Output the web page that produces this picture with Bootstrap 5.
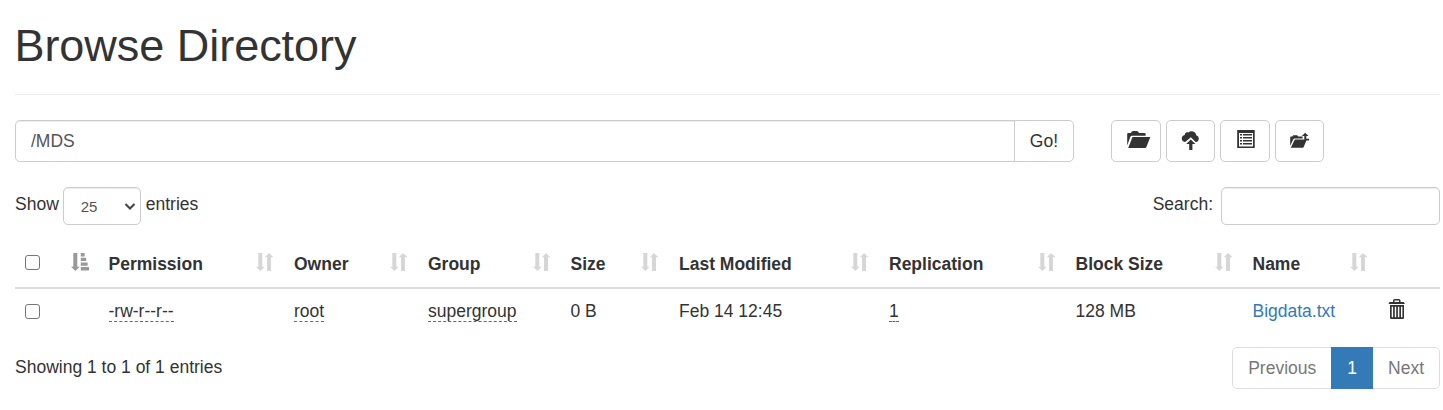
<!DOCTYPE html>
<html lang="en">
<head>
<meta charset="utf-8">
<meta name="viewport" content="width=device-width, initial-scale=1">
<title>Browsing HDFS</title>
<link href="https://cdn.jsdelivr.net/npm/bootstrap@5.3.0/dist/css/bootstrap.min.css" rel="stylesheet">
<style>
body { font: 17.5px/25px "Liberation Sans", Arial, sans-serif; color: #333; background: #fff; overflow: hidden; }
.page { padding: 21px 3px 0 15px; }
.page-title { font-size: 45px; line-height: 50px; font-weight: 400; padding-bottom: 23px; margin: 0 0 25px; border-bottom: 1px solid #eee; letter-spacing: -.03px; text-indent: -.6px; }
.form-control, .form-select { font-size: 17.5px; color: #555; border-color: #ccc; border-radius: 5px; box-shadow: inset 0 1px 1px rgba(0,0,0,.075); }
.path-group { width: 1059px; }
.path-group .form-control { height: 42px; padding: 0 15px; }
.btn-tool { --bs-btn-color: #333; --bs-btn-border-color: #ccc; --bs-btn-bg: #fff; --bs-btn-font-size: 17.5px; --bs-btn-border-radius: 5px; --bs-btn-padding-x: 15px; --bs-btn-padding-y: 0; height: 42px; line-height: 25px; }
.tools { margin-left: 37px; gap: 5px; }
.tools .btn { width: 49px; padding: 0; display: block; }
.tools .btn.wide { width: 50px; }
.tools svg { display: block; }
.controls { margin-top: 25px; height: 38px; }
.controls label { line-height: 34px; }
.length-select { width: 78px; height: 38px; font-size: 15px; line-height: 20px; padding: 1px 0 0 17px; margin: 0 5px 0 4px; background-size: 12px 12px; background-position: right 4px center;
  background-image: url("data:image/svg+xml,%3Csvg xmlns='http://www.w3.org/2000/svg' viewBox='0 0 12 12'%3E%3Cpath d='M1.5 4l4.5 4.5L10.5 4' fill='none' stroke='%23444' stroke-width='2.1'/%3E%3C/svg%3E"); }
.search-box { width: 219px; height: 38px; margin-left: 8px; }
.files { table-layout: fixed; width: 1425px; margin: 14px 0 0; --bs-table-color: #333; color: #333; }
.files > :not(caption) > * > * { padding: 0 10px; border: 0; vertical-align: middle; white-space: nowrap; }
.files > thead > tr > th { height: 50px; padding-top: 2px; border-bottom: 2px solid #ddd; }
.files thead tr { height: 49px; }
.files > thead > tr > th { height: 49px; }
.files td { height: 46px; }
.files > tbody > tr > td { padding-bottom: 1px; }
.files .form-check-input { display: block; width: 15px; height: 15px; margin: 0; border: 1px solid #767676; border-radius: 3px; }
.files thead .form-check-input { margin-bottom: 4px; }
.files thead svg { display: block; margin-bottom: 5px; color: #d6d6d6; }
.files thead svg.sorted { color: #999; }
.editable { border-bottom: 1px dashed #08c; display: inline-block; line-height: 20px; }
.files a { color: #337ab7; text-decoration: none; }
.info { padding-top: 21px; }
.pager-list { --bs-pagination-font-size: 17.5px; --bs-pagination-color: #777; --bs-pagination-border-color: #ddd; --bs-pagination-border-radius: 5px; --bs-pagination-padding-x: 15px; --bs-pagination-padding-y: 7.5px; --bs-pagination-active-bg: #337ab7; --bs-pagination-active-border-color: #337ab7; margin: 13px 0 0; }
.pager-list .page-link { height: 42px; line-height: 25px; }
</style>
</head>
<body>
<svg class="d-none" aria-hidden="true">
  <symbol id="sort" viewBox="0 0 18 18"><path fill="currentColor" d="M2.3 0h4v13.7h2.4L4.4 18 0 13.7h2.3zM11 18h4V4.3h2.4L13 0 8.8 4.3H11z"/></symbol>
</svg>
<main class="page">
  <h1 class="page-title">Browse Directory</h1>
  <div class="d-flex">
    <div class="input-group path-group">
      <input class="form-control" type="text" value="/MDS" aria-label="Directory">
      <button class="btn btn-tool" type="button">Go!</button>
    </div>
    <div class="d-flex tools">
      <button class="btn btn-tool wide" type="button" aria-label="Create directory"><svg width="48" height="40" viewBox="0 0 48 40"><path fill="#333" d="M15.2 24.5V13q0-1 1-1h2.7q.7-2 2.3-2h3.5q1.6 0 2.3 2h5.6q1 0 1 1v1.8H20q-1.2 0-1.6 1zM20.5 16h17.8l-4 10.3q-.3.8-1.1.8H16.2z"/></svg></button>
      <button class="btn btn-tool" type="button" aria-label="Upload files"><svg width="47" height="40" viewBox="0 0 47 40"><path fill="#333" d="M18.2 21h-.3a3.6 3.6 0 0 1-.2-7.1c.1-2.2 1.9-3.1 3.7-2.5 3-2.2 7.4-.7 7.9 2.9a3.5 3.5 0 0 1 .1 6.7h-.8l-4.8-4.8zM23.8 18.4l4.6 4.7h-3V29h-3.2v-5.9h-3z"/></svg></button>
      <button class="btn btn-tool wide" type="button" aria-label="Cut"><svg width="48" height="40" viewBox="0 0 48 40"><path fill="#333" fill-rule="evenodd" d="M16.2 9h17.5v18H16.2zm1.8 3v13.4h14V12z"/><path fill="#333" d="M19 13h2v1.5h-2zm3 0h9v1.5h-9zM19 16h2v1.5h-2zm3 0h9v1.5h-9zM19 19h2v1.5h-2zm3 0h9v1.5h-9zM19 22h2v1.5h-2zm3 0h9v1.5h-9z"/></svg></button>
      <button class="btn btn-tool" type="button" aria-label="Parent directory"><svg width="47" height="40" viewBox="0 0 47 40"><path fill="#333" d="M14.2 24.7v-8.5q0-.8.8-.8h1.4l.8-1.2h4l1 1.2h4.4v2h-8.2q-.8 0-1.2 1zM18.8 18.6h12l-3 7.2q-.3.9-1 .9H14.8zM29.2 11.8l3.3 3.1h-2.2v2.9h2.8v1.8h-4.8v-4.7h-2.4z"/></svg></button>
    </div>
  </div>
  <div class="d-flex justify-content-between controls">
    <div class="d-flex">
      <label for="length">Show</label>
      <select id="length" class="form-select length-select"><option>25</option></select>
      <label for="length">entries</label>
    </div>
    <div class="d-flex">
      <label for="search">Search:</label>
      <input id="search" type="search" class="form-control search-box">
    </div>
  </div>
  <table class="table files">
    <colgroup><col style="width:83.5px"><col style="width:185.5px"><col style="width:134px"><col style="width:142.5px"><col style="width:108.5px"><col style="width:210px"><col style="width:186.5px"><col style="width:177px"><col style="width:135px"><col style="width:62.5px"></colgroup>
    <thead>
      <tr>
        <th><div class="d-flex justify-content-between align-items-center"><input class="form-check-input" type="checkbox" aria-label="Select all"><svg class="sorted" width="18" height="18" viewBox="0 0 18 18"><path fill="currentColor" d="M2.3 0h4v13.7h2.4L4.4 18 0 13.7h2.3zM9.8 0h3.8v3.4H9.8zM9.8 4.7h5.4v3.4H9.8zM9.8 9.4h6.8v3.3H9.8zM9.8 14H18v3.4H9.8z"/></svg></div></th>
        <th><div class="d-flex justify-content-between align-items-center">Permission<svg width="18" height="18"><use href="#sort"/></svg></div></th>
        <th><div class="d-flex justify-content-between align-items-center">Owner<svg width="18" height="18"><use href="#sort"/></svg></div></th>
        <th><div class="d-flex justify-content-between align-items-center">Group<svg width="18" height="18"><use href="#sort"/></svg></div></th>
        <th><div class="d-flex justify-content-between align-items-center">Size<svg width="18" height="18"><use href="#sort"/></svg></div></th>
        <th><div class="d-flex justify-content-between align-items-center">Last Modified<svg width="18" height="18"><use href="#sort"/></svg></div></th>
        <th><div class="d-flex justify-content-between align-items-center">Replication<svg width="18" height="18"><use href="#sort"/></svg></div></th>
        <th><div class="d-flex justify-content-between align-items-center">Block Size<svg width="18" height="18"><use href="#sort"/></svg></div></th>
        <th><div class="d-flex justify-content-between align-items-center">Name<svg width="18" height="18"><use href="#sort"/></svg></div></th>
        <th></th>
      </tr>
    </thead>
    <tbody>
      <tr>
        <td><input class="form-check-input" type="checkbox" aria-label="Select Bigdata.txt"></td>
        <td><span class="editable">-rw-r--r--</span></td>
        <td><span class="editable">root</span></td>
        <td><span class="editable">supergroup</span></td>
        <td>0 B</td>
        <td>Feb 14 12:45</td>
        <td><span class="editable">1</span></td>
        <td>128 MB</td>
        <td><a href="#">Bigdata.txt</a></td>
        <td><svg class="d-block mb-1" width="18" height="21" viewBox="0 0 18 21"><path fill="none" stroke="#333" stroke-width="1.5" d="M5.7 3V1.8q0-1 1-1h4.1q1 0 1 1V3"/><path fill="#333" d="M1.5 3h14.3l1.2 2H.5z"/><path fill="#333" fill-rule="evenodd" d="M2 6h14v12.8q0 1.2-1.2 1.2H3.2Q2 20 2 18.8zM3.7 7.7v10.5h1.4V7.7zm3.1 0v10.5h1.4V7.7zm3.1 0v10.5h1.4V7.7zm3.1 0v10.5h1.4V7.7z"/></svg></td>
      </tr>
    </tbody>
  </table>
  <div class="d-flex justify-content-between">
    <div class="info">Showing 1 to 1 of 1 entries</div>
    <ul class="pagination pager-list">
      <li class="page-item"><a class="page-link" href="#">Previous</a></li>
      <li class="page-item active"><a class="page-link" href="#">1</a></li>
      <li class="page-item"><a class="page-link" href="#">Next</a></li>
    </ul>
  </div>
</main>
<script src="https://cdn.jsdelivr.net/npm/bootstrap@5.3.0/dist/js/bootstrap.bundle.min.js"></script>
</body>
</html>
